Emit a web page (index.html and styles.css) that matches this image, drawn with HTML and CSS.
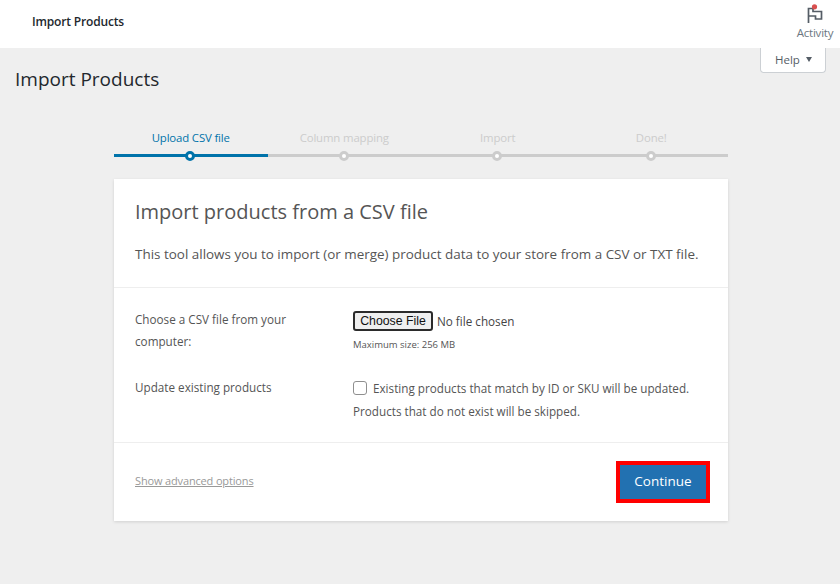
FILE: index.html
```html
<!DOCTYPE html>
<html lang="en">
<head>
<meta charset="utf-8">
<title>Import Products</title>
<link rel="stylesheet" href="styles.css">
</head>
<body>
<header class="topbar">
  <div class="topbar-title">Import Products</div>
  <div class="activity">
    <svg class="activity-icon" width="18" height="20" viewBox="0 0 18 20" aria-hidden="true">
      <path d="M2.500 19V4.500H7V7.500H15.500V15H9.500V12H2.500" fill="none" stroke="#555d66" stroke-width="1.700"/>
      <circle cx="8.500" cy="2.800" r="2.600" fill="#d94f4f"/>
    </svg>
    <span class="activity-label">Activity</span>
  </div>
</header>
<div class="help-wrap">
  <div class="help-tab">Help<span class="help-arrow"></span></div>
</div>
<h1 class="page-title">Import Products</h1>
<main class="wizard">
  <ol class="steps">
    <li class="step active">Upload CSV file</li>
    <li class="step">Column mapping</li>
    <li class="step">Import</li>
    <li class="step">Done!</li>
  </ol>
  <section class="card">
    <div class="card-head">
      <h2 class="card-title">Import products from a CSV file</h2>
      <p class="card-intro">This tool allows you to import (or merge) product data to your store from a CSV or TXT file.</p>
    </div>
    <div class="card-form">
      <div class="form-row upload-row">
        <div class="form-label">Choose a CSV file from your computer:</div>
        <div class="form-field">
          <div class="file-line"><span class="file-button">Choose File</span><span class="file-name">No file chosen</span></div>
          <div class="file-hint">Maximum size: 256 MB</div>
        </div>
      </div>
      <div class="form-row">
        <div class="form-label">Update existing products</div>
        <div class="form-field update">
          <span class="checkbox"></span>Existing products that match by ID or SKU will be updated. Products that do not exist will be skipped.
        </div>
      </div>
    </div>
    <div class="card-foot">
      <a class="advanced">Show advanced options</a>
      <span class="continue">Continue</span>
    </div>
  </section>
</main>
</body>
</html>
```
FILE: styles.css
```css
* { box-sizing: border-box; }
html, body { margin: 0; padding: 0; }
body {
  width: 840px;
  height: 584px;
  overflow: hidden;
  background: #efefef;
  color: #444;
  font-family: "Open Sans", "Noto Sans", sans-serif;
  position: relative;
}
.topbar {
  height: 48px;
  background: #fff;
  display: flex;
  justify-content: space-between;
  padding-left: 32px;
}
.topbar-title {
  font-size: 12px;
  font-weight: 600;
  line-height: 44px;
  color: #23282d;
  letter-spacing: -0.17px;
}
.activity {
  width: 50px;
  display: flex;
  flex-direction: column;
  align-items: center;
  padding-top: 4px;
}
.activity-icon { display: block; }
.activity-label {
  font-size: 11.500px;
  line-height: 16px;
  color: #6c7781;
  letter-spacing: -0.2px;
  margin-top: 1px;
}
.help-wrap {
  position: absolute;
  top: 48px;
  right: 14px;
}
.help-tab {
  width: 66px;
  height: 25px;
  background: #fff;
  border: 1px solid #ccd0d4;
  border-top: 0;
  border-radius: 0 0 4px 4px;
  font-size: 11.500px;
  line-height: 23px;
  color: #555d66;
  padding: 0 0 2px 14px;
  display: flex;
  align-items: center;
}
.help-arrow {
  margin-left: 6px;
  width: 0;
  height: 0;
  border-left: 3.500px solid transparent;
  border-right: 3.500px solid transparent;
  border-top: 5px solid #555d66;
}
.page-title {
  margin: 0;
  padding: 17px 0 0 15px;
  font-size: 19px;
  line-height: 28px;
  font-weight: 400;
  color: #23282d;
}
.wizard {
  width: 614px;
  margin: 36px 0 0 114px;
}
.steps {
  list-style: none;
  margin: 0;
  padding: 0;
  display: grid;
  grid-template-columns: repeat(4, 1fr);
}
.step {
  position: relative;
  height: 28px;
  text-align: center;
  font-size: 11.400px;
  line-height: 18px;
  color: #ccc;
  letter-spacing: -0.15px;
  border-bottom: 3px solid #ccc;
}
.step::after {
  content: "";
  box-sizing: border-box;
  position: absolute;
  left: 50%;
  bottom: -6.500px;
  width: 10px;
  height: 10px;
  margin-left: -5.500px;
  border-radius: 50%;
  background: #fff;
  border: 3px solid #ccc;
}
.step.active { color: #0073aa; border-bottom-color: #0073aa; }
.step.active::after { border-color: #0073aa; }
.card {
  margin-top: 22px;
  height: 342px;
  background: #fff;
  box-shadow: 0 1px 3px rgba(0, 0, 0, 0.13);
  display: flex;
  flex-direction: column;
}
.card-head {
  height: 109px;
  padding: 20px 21px 0;
  border-bottom: 1px solid #eee;
}
.card-title {
  margin: 0;
  font-size: 20px;
  line-height: 26px;
  font-weight: 400;
  color: #555;
}
.card-intro {
  margin: 18px 0 0;
  font-size: 13.450px;
  line-height: 22px;
  color: #555;
  white-space: nowrap;
}
.card-form {
  height: 155px;
  padding: 21px 21px 0;
  border-bottom: 1px solid #eee;
  display: flex;
  flex-direction: column;
  gap: 15px;
}
.form-row {
  display: grid;
  grid-template-columns: 218px 1fr;
}
.upload-row { height: 53px; }
.form-label {
  font-size: 11.700px;
  line-height: 21.500px;
  color: #555;
  width: 170px;
}
.form-field { font-size: 11.700px; line-height: 22px; color: #555; }
.file-line {
  display: flex;
  align-items: center;
  height: 22px;
  margin-top: 1px;
}
.file-button {
  width: 80px;
  height: 20px;
  background: #efefef;
  border: 2px solid #2b2b2b;
  border-radius: 3px;
  font-family: "Liberation Sans", sans-serif;
  font-size: 12.300px;
  line-height: 16px;
  text-align: center;
  color: #111;
}
.file-name {
  margin-left: 4px;
  font-size: 11.700px;
  color: #444;
}
.file-hint {
  font-size: 9.500px;
  line-height: 14px;
  margin-top: 6px;
  color: #555;
}
.update { line-height: 23px; width: 345px; }
.checkbox {
  display: inline-block;
  width: 14px;
  height: 14px;
  background: #fff;
  border: 1px solid #8f8f8f;
  border-radius: 3px;
  margin-right: 6px;
  vertical-align: -2px;
}
.card-foot {
  flex: 1;
  display: flex;
  justify-content: space-between;
  align-items: center;
  padding: 0 18px 0 21px;
}
.advanced {
  font-size: 11px;
  color: #999;
  text-decoration: underline;
  letter-spacing: -0.15px;
  margin-top: -4px;
}
.continue {
  width: 94px;
  height: 42px;
  background: #2271b1;
  border: 4px solid #ff0000;
  color: #fff;
  font-size: 13.500px;
  line-height: 33px;
  text-align: center;
}
```
